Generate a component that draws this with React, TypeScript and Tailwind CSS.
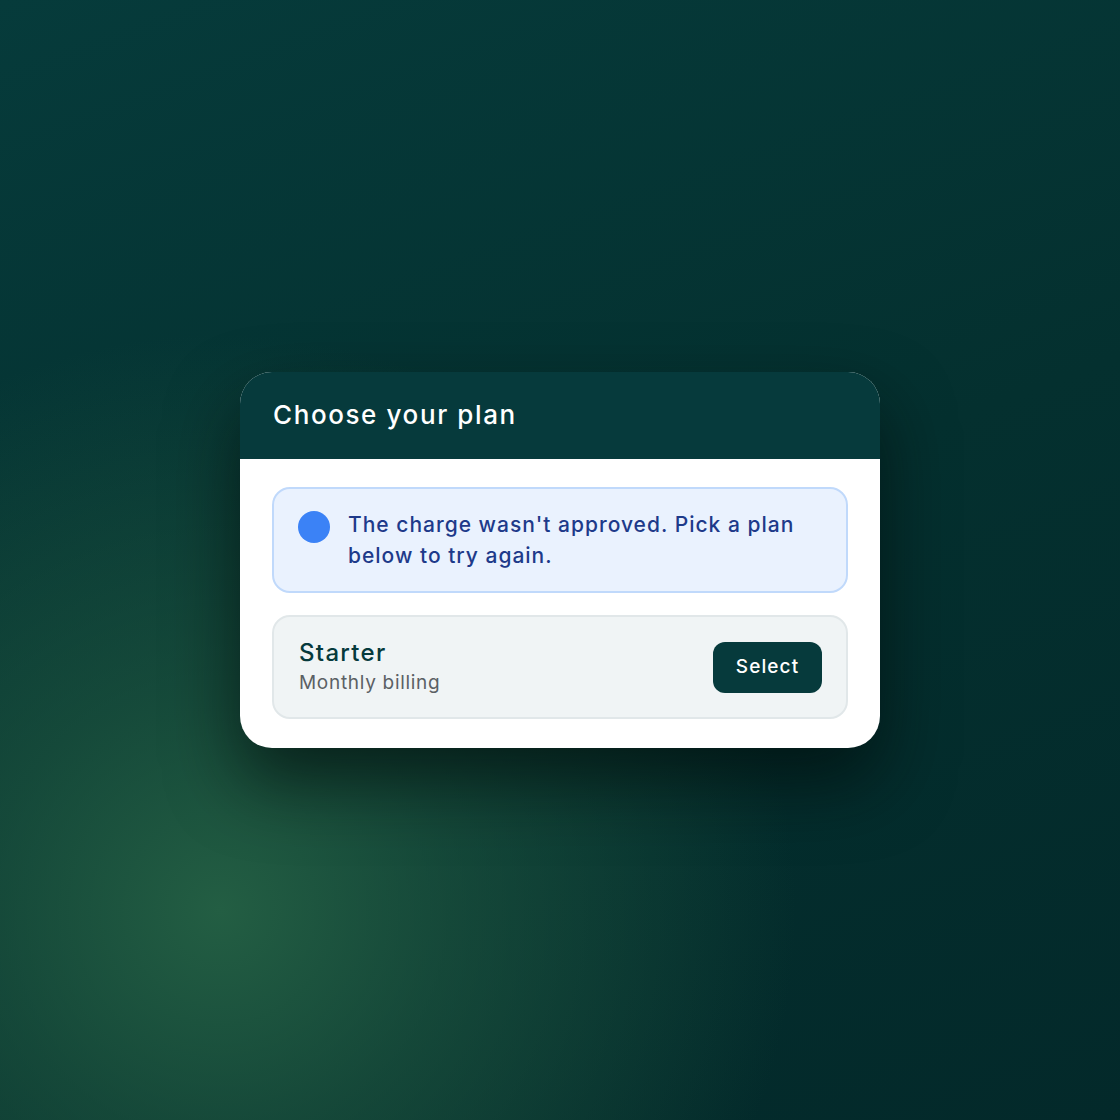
export default function App() {
  return (
    <div
      className="relative w-[1120px] h-[1120px] overflow-hidden bg-[linear-gradient(160deg,#063b3b_0%,#04302f_50%,#03292a_100%)] flex items-center justify-center"
      style={{ fontFamily: 'Inter, "Noto Sans", sans-serif' }}
    >
      <div className="absolute inset-0 bg-[radial-gradient(circle_at_220px_910px,#235e43_0%,rgba(35,94,67,0.55)_18%,rgba(35,94,67,0)_45%)]" />

      <div className="relative w-[640px] rounded-[32px] bg-white overflow-hidden shadow-[0_34px_70px_rgba(0,12,10,0.65)]">
        {/* Header */}
        <div className="h-[87px] bg-[#063a3c] px-[33px] flex items-center">
          <h1 className="text-[26px] font-medium text-white tracking-[1.6px] pb-[2px]">Choose your plan</h1>
        </div>

        {/* Body */}
        <div className="px-[32px] pt-[28px] pb-[29px] flex flex-col gap-[22px]">
          <div className="flex items-start gap-[18px] rounded-[18px] border-2 border-[#c0d9fb] bg-[#eaf2fe] px-[24px] py-[20px]">
            <span className="mt-[2px] w-[32px] h-[32px] shrink-0 rounded-full bg-[#3b82f6]" />
            <p className="text-[21px] leading-[31px] font-medium text-[#1e3a8a] tracking-[1px]">
              The charge wasn't approved. Pick a plan below to try again.
            </p>
          </div>

          <div className="flex items-center justify-between rounded-[18px] border-2 border-[#e1e7e9] bg-[#f0f4f5] pl-[25px] pr-[24px] h-[104px]">
            <div className="flex flex-col pt-[2px]">
              <span className="text-[24px] leading-[30px] font-medium text-[#063a3c] tracking-[1.3px]">Starter</span>
              <span className="text-[19px] leading-[30px] text-[#5b6064] tracking-[0.7px]">Monthly billing</span>
            </div>
            <button className="w-[109px] h-[51px] rounded-[12px] bg-[#063a3c] text-white text-[19px] font-medium tracking-[1.1px]">
              Select
            </button>
          </div>
        </div>
      </div>
    </div>
  );
}
